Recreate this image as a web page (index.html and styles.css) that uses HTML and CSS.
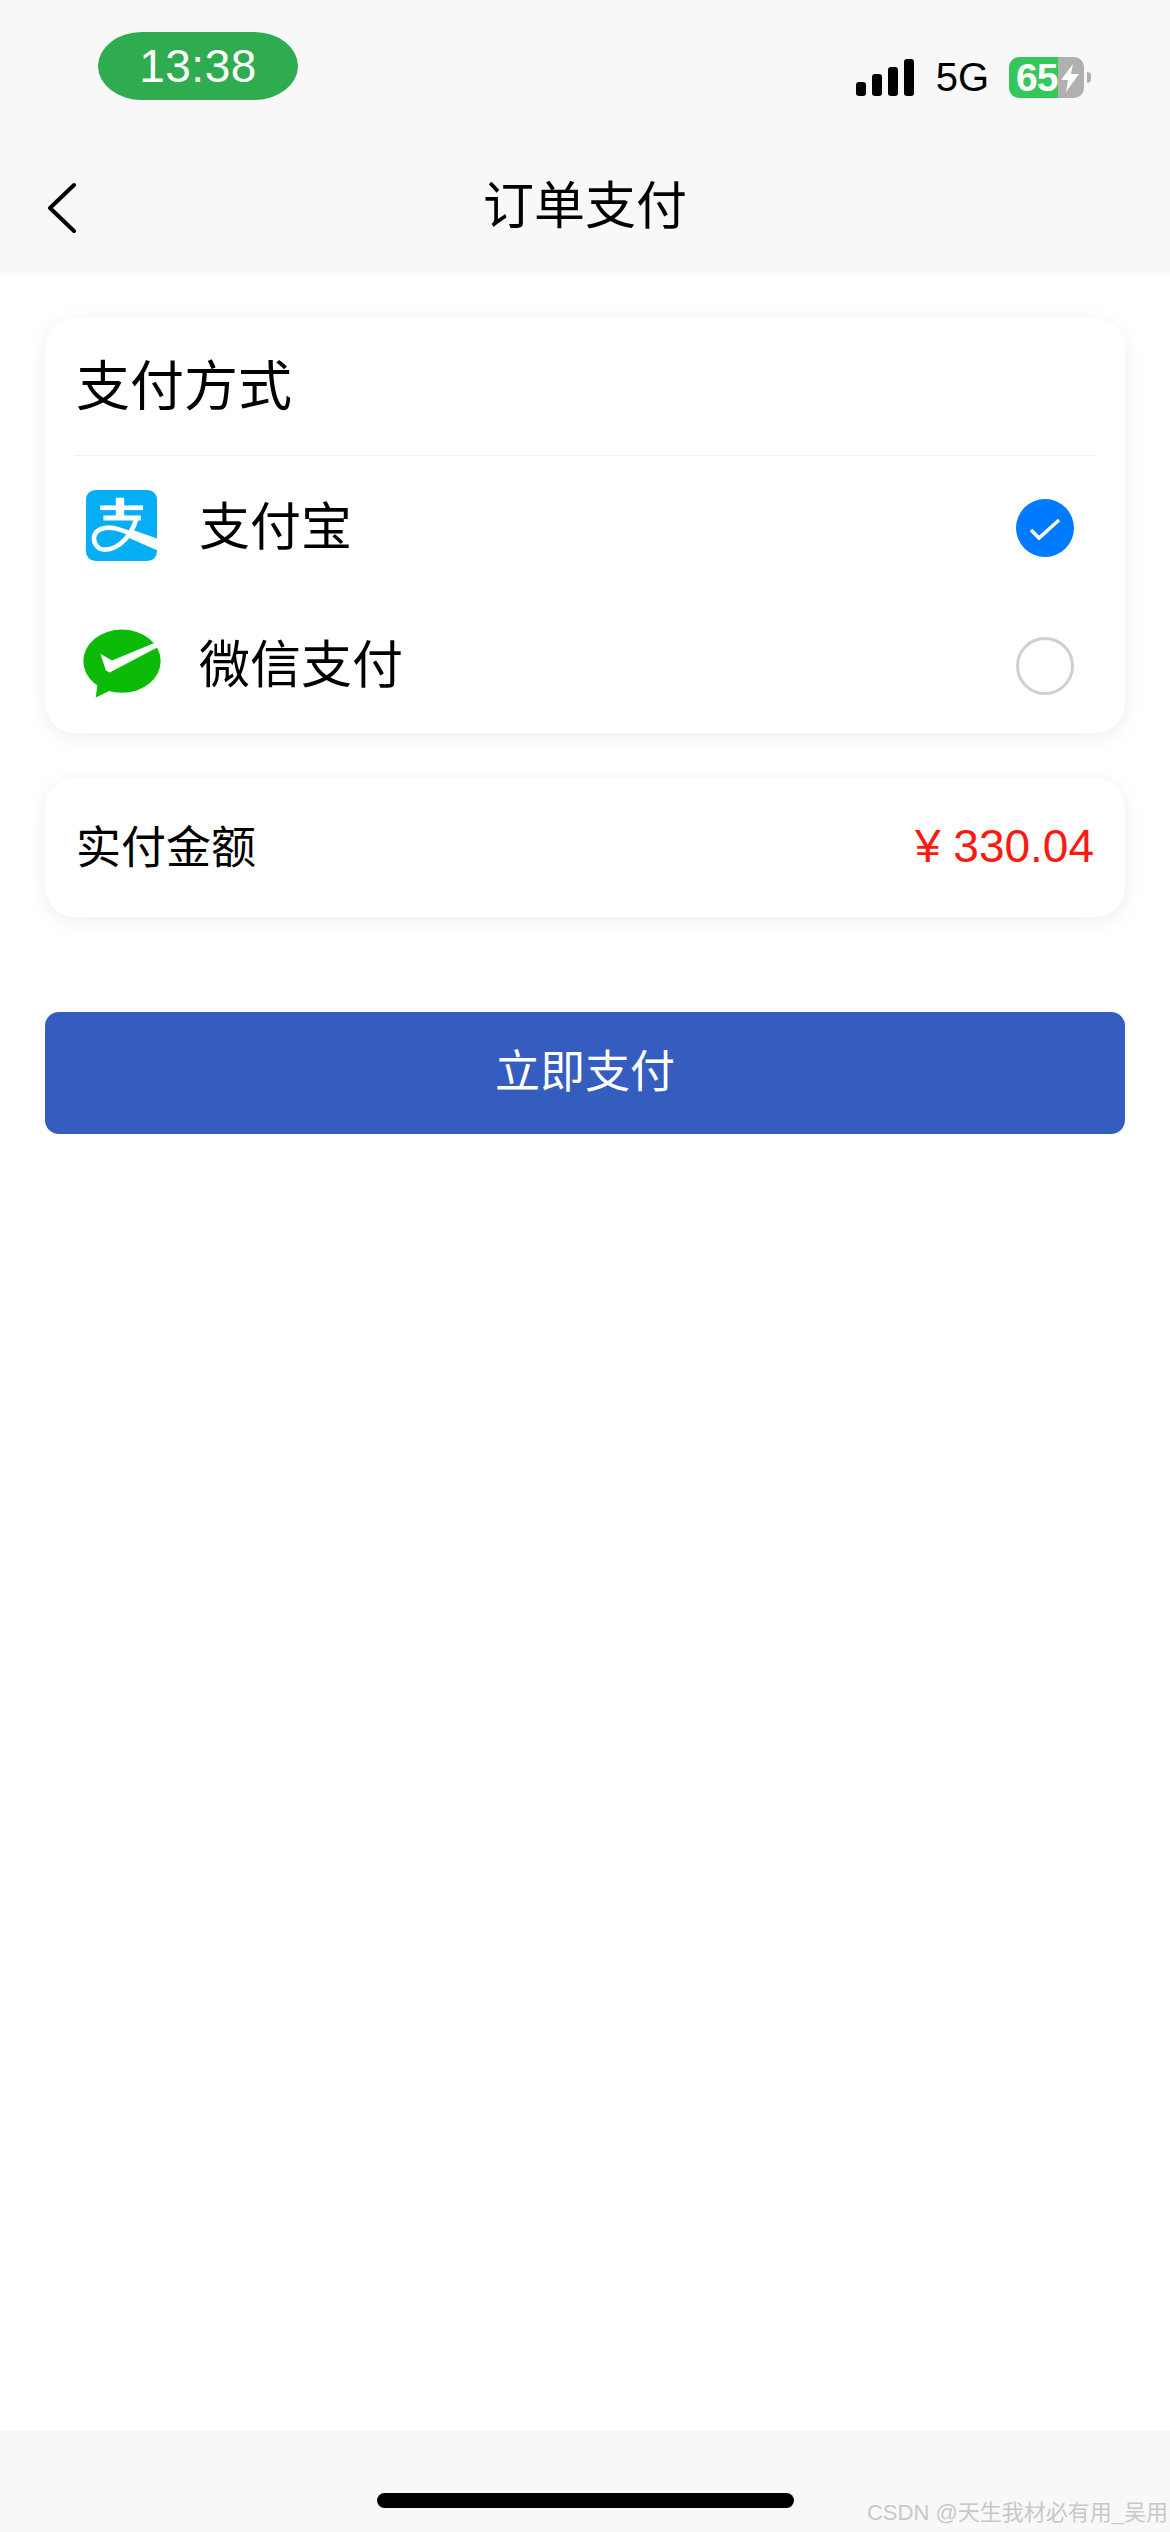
FILE: index.html
```html
<!DOCTYPE html>
<html lang="zh-CN">
<head>
  <meta charset="UTF-8" />
  <meta name="viewport" content="width=device-width, initial-scale=1.0" />
  <title>订单支付</title>
  <link rel="stylesheet" href="styles.css">
</head>
<body>
  <div class="page">
    <div class="top">
      <div class="status-bar">
        <div class="time-pill">13:38</div>
        <div class="status-right">
          <div class="signal">
            <span class="bar bar1"></span>
            <span class="bar bar2"></span>
            <span class="bar bar3"></span>
            <span class="bar bar4"></span>
          </div>
          <span class="network">5G</span>
          <div class="battery">
            <span class="battery-num">65</span>
            <svg class="bolt" viewBox="0 0 18 28"><path d="M12 0 L0 16 L7 16 L5 28 L18 10 L10 10 Z" fill="#fff"/></svg>
          </div>
        </div>
      </div>
      <div class="nav-bar">
        <svg class="back" viewBox="0 0 32 54"><path d="M28 3 L4 26 L28 49" fill="none" stroke="#000" stroke-width="4" stroke-linecap="round" stroke-linejoin="round"/></svg>
        <h1>订单支付</h1>
      </div>
    </div>

    <div class="content">
      <div class="card pay-card">
        <div class="card-title">支付方式</div>
        <div class="pay-row">
          <div class="pay-icon">
            <svg class="icon-alipay" viewBox="48 60 212 212">
              <rect x="48" y="60" width="212" height="212" rx="28" fill="#06aef6"/>
              <rect x="90" y="106" width="128" height="14" fill="#fff"/>
              <rect x="137" y="83" width="25" height="60" fill="#fff"/>
              <rect x="100" y="136" width="112" height="15" fill="#fff"/>
              <path d="M198 146 C186 190 150 238 104 238 C80 238 70 216 72 200 C76 178 104 168 134 174 C170 182 220 208 260 224" fill="none" stroke="#fff" stroke-width="14"/>
              <path d="M190 180 L260 205 L260 240 L170 200 Z" fill="#fff"/>
            </svg>
          </div>
          <span class="pay-name">支付宝</span>
          <span class="radio radio-on">
            <svg viewBox="0 0 58 58"><path d="M15 31 L23 39 L43 21" fill="none" stroke="#fff" stroke-width="3.5"/></svg>
          </span>
        </div>
        <div class="pay-row">
          <div class="pay-icon">
            <svg class="icon-wechat" viewBox="38 476 234 206">
              <ellipse cx="155" cy="572" rx="116" ry="95" fill="#0bbb07"/>
              <path d="M82 640 L76 681 L120 660 Z" fill="#0bbb07"/>
              <path d="M90 550 L125 570 L250 518 L262 530 L118 606 L107 600 Z" fill="#fff"/>
            </svg>
          </div>
          <span class="pay-name">微信支付</span>
          <span class="radio"></span>
        </div>
      </div>

      <div class="card amount-card">
        <span class="amount-label">实付金额</span>
        <span class="amount-value">¥ 330.04</span>
      </div>

      <button class="pay-btn">立即支付</button>
    </div>

    <div class="bottom">
      <div class="home-bar"></div>
      <span class="watermark">CSDN @天生我材必有用_吴用</span>
    </div>
  </div>
</body>
</html>
```

FILE: styles.css
```css
body {
  margin: 0;
  font-family: "Liberation Sans", "Noto Sans CJK SC", sans-serif;
  background: #fff;
  color: #000;
}

.page {
  width: 1170px;
  height: 2532px;
  display: flex;
  flex-direction: column;
  overflow: hidden;
}

/* top bar */
.top {
  height: 273px;
  background-color: #f8f8f8;
}

.status-bar {
  height: 140px;
  box-sizing: border-box;
  padding: 32px 86px 0 98px;
  display: flex;
  justify-content: space-between;
  align-items: flex-start;
}

.time-pill {
  width: 200px;
  height: 68px;
  line-height: 68px;
  border-radius: 44px / 34px;
  background-color: #2fab50;
  color: #fff;
  font-size: 46px;
  letter-spacing: 0.5px;
  text-align: center;
}

.status-right {
  display: flex;
  align-items: center;
  margin-top: 25px;
}

.signal {
  display: flex;
  align-items: flex-end;
  gap: 6px;
  height: 37px;
  margin-right: 22px;
}

.bar {
  width: 10px;
  border-radius: 3px;
  background-color: #000;
}

.bar1 { height: 14px; }
.bar2 { height: 22px; }
.bar3 { height: 29px; }
.bar4 { height: 37px; }

.network {
  font-size: 40px;
  line-height: 41px;
  margin-right: 20px;
}

.battery {
  position: relative;
  width: 75px;
  height: 41px;
  box-sizing: border-box;
  padding-left: 7px;
  display: flex;
  align-items: center;
  border-radius: 10px;
  background: linear-gradient(to right, #34c759 49px, #b0b0b0 49px);
  color: #fff;
}

.battery::after {
  content: "";
  position: absolute;
  left: 78px;
  top: 15px;
  width: 4px;
  height: 11px;
  border-radius: 0 6px 6px 0;
  background-color: #b0b0b0;
}

.battery-num {
  width: 45px;
  font-size: 39px;
  font-weight: bold;
  letter-spacing: -1px;
}

.bolt {
  width: 18px;
  height: 28px;
}

.nav-bar {
  position: relative;
  height: 133px;
  display: flex;
  align-items: center;
  justify-content: center;
}

.nav-bar h1 {
  margin: 0;
  padding-bottom: 9px;
  font-size: 51px;
  font-weight: 400;
}

.back {
  position: absolute;
  left: 46px;
  top: 42px;
  width: 32px;
  height: 54px;
}

/* content */
.content {
  flex: 1;
  padding: 45px 45px 0;
  display: flex;
  flex-direction: column;
}

.card {
  background-color: #fff;
  border-radius: 30px;
  box-shadow: 0 4px 20px rgba(0, 0, 0, 0.07);
}

.pay-card {
  padding: 0 30px;
  height: 415px;
  box-sizing: border-box;
}

.card-title {
  height: 137px;
  line-height: 138px;
  padding-left: 1px;
  font-size: 54px;
  border-bottom: 1px solid #f0f0f2;
}

.pay-row {
  height: 138px;
  display: flex;
  align-items: center;
  padding-right: 21px;
}

.pay-icon {
  width: 93px;
  margin-right: 31px;
  display: flex;
  justify-content: center;
}

.icon-alipay {
  width: 71px;
  height: 71px;
}

.icon-wechat {
  width: 78px;
  height: 69px;
}

.pay-name {
  flex: 1;
  padding-bottom: 5px;
  font-size: 51px;
}

.radio {
  width: 58px;
  height: 58px;
  margin-top: 6px;
  box-sizing: border-box;
  border: 3px solid #cfcfcf;
  border-radius: 50%;
}

.radio-on {
  border: none;
  background-color: #007aff;
}

.radio-on svg {
  display: block;
  width: 58px;
  height: 58px;
}

.amount-card {
  margin-top: 45px;
  height: 139px;
  padding: 0 31px;
  display: flex;
  align-items: center;
  justify-content: space-between;
}

.amount-label {
  padding-bottom: 6px;
  font-size: 45px;
}

.amount-value {
  padding-bottom: 4px;
  font-size: 46px;
  color: #fa1a10;
}

.pay-btn {
  margin-top: 95px;
  height: 122px;
  padding-bottom: 10px;
  border: none;
  border-radius: 14px;
  background-color: #355dbf;
  color: #fff;
  font-family: inherit;
  font-size: 45px;
}

/* bottom bar */
.bottom {
  position: relative;
  height: 102px;
  background-color: #f8f8f8;
  display: flex;
  justify-content: center;
}

.home-bar {
  width: 417px;
  height: 15px;
  margin-top: 63px;
  border-radius: 8px;
  background-color: #000;
}

.watermark {
  position: absolute;
  right: 2px;
  bottom: 6px;
  font-size: 22px;
  color: #c8c8c8;
  white-space: nowrap;
}
```
